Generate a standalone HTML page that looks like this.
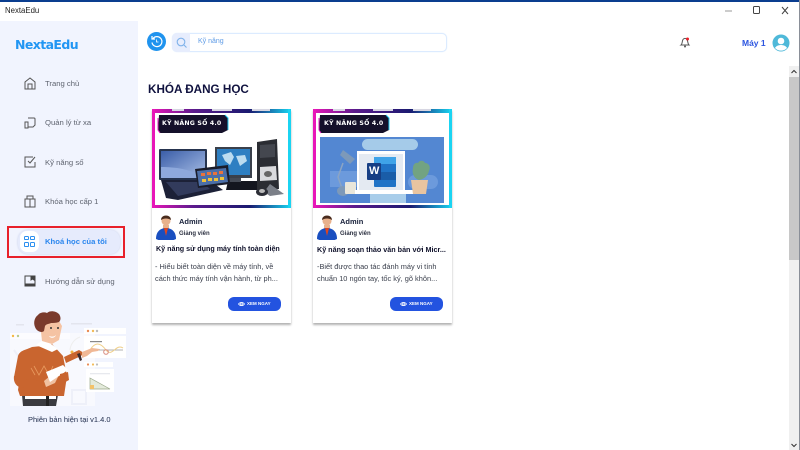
<!DOCTYPE html>
<html><head><meta charset="utf-8">
<style>
*{box-sizing:border-box;margin:0;padding:0}
html,body{width:800px;height:450px;overflow:hidden;background:#fff;font-family:"Liberation Sans","DejaVu Sans",sans-serif}
.a{position:absolute}
.t{position:absolute;white-space:nowrap}
.nav{font-size:7.700px;color:#5f6470;font-family:"Liberation Sans",sans-serif}
.card{position:absolute;top:109px;width:139px;height:214px;background:#fff;box-shadow:0 2px 2px rgba(0,0,0,.3)}
.btn{position:absolute;left:76px;top:188px;width:53px;height:14px;border-radius:6px;background:#2353e0;color:#fff;font-size:4.5px;font-weight:bold;line-height:14px;padding-left:19px}
.btn svg{position:absolute;left:10px;top:4px}
</style></head><body>
<div class="a" style="left:0;top:0;width:800px;height:2px;background:#0a3d8f"></div>
<div class="t" style="left:5px;top:6px;font-size:7.800px;color:#222">NextaEdu</div>
<svg class="a" style="left:725px;top:3px" width="75" height="16" fill="none" stroke="#555"><path d="M0 8h7" stroke="#999"/><rect x="28.500" y="3.500" width="6" height="7" rx="1" stroke="#444"/><path d="M57 4l6 7M63 4l-6 7" stroke="#444"/></svg>

<!-- sidebar -->
<div class="a" style="left:0;top:21px;width:138px;height:429px;background:#f1f4fe"></div>
<div class="t" style="left:15px;top:37px;font-size:12.500px;font-weight:bold;color:#2196f3;font-family:'DejaVu Sans',sans-serif;letter-spacing:-.6px">NextaEdu</div>

<svg class="a" style="left:22px;top:75px" width="16" height="16" fill="none" stroke="#555" stroke-width="1"><path d="M3 14V7l5-4 5 4v7zM6 14V9h4v5"/></svg>
<div class="t nav" style="left:45px;top:79px">Trang chủ</div>
<svg class="a" style="left:22px;top:114px" width="16" height="16" fill="none" stroke="#555"><path d="M6 4h6a1 1 0 0 1 1 1v6l-2 2H6M3 8h3v6H3z"/></svg>
<div class="t nav" style="left:45px;top:118px">Quản lý từ xa</div>
<svg class="a" style="left:22px;top:154px" width="16" height="16" fill="none" stroke="#555"><path d="M13 8v5H3V3h8M6 7l2 2 5-6"/></svg>
<div class="t nav" style="left:45px;top:158px">Kỹ năng số</div>
<svg class="a" style="left:22px;top:193px" width="16" height="16" fill="none" stroke="#555"><path d="M3 6h10v8H3zM8 6v8M5 6V3h6v3"/></svg>
<div class="t nav" style="left:45px;top:197px">Khóa học cấp 1</div>

<div class="a" style="left:7px;top:226px;width:118px;height:32px;border:2px solid #e8202a"></div>
<div class="a" style="left:18px;top:230px;width:102px;height:24px;border-radius:10px;background:#e6ebfc;box-shadow:0 0 2px #c5cdea"></div>
<div class="a" style="left:20px;top:231px;width:19px;height:21px;border-radius:7px;background:#fff"></div>
<svg class="a" style="left:23px;top:235px" width="13" height="13" fill="none" stroke="#2b8ff0"><rect x="1.500" y="1.500" width="4" height="3" rx=".8"/><rect x="7.500" y="1.500" width="4" height="3" rx=".8"/><rect x="1.500" y="7.500" width="4" height="4" rx=".8"/><rect x="7.500" y="7.500" width="4" height="4" rx=".8"/></svg>
<div class="t nav" style="left:45px;top:237px;color:#2a86ee;font-weight:bold">Khoá học của tôi</div>

<svg class="a" style="left:22px;top:273px" width="16" height="16" fill="none" stroke="#444"><path d="M3 3h10v10H3z"/><path d="M3 11h10v2H3z" fill="#444"/><path d="M9 3v4l1.500-1L12 7V3" fill="#444"/></svg>
<div class="t nav" style="left:45px;top:277px">Hướng dẫn sử dụng</div>

<!-- illustration -->
<svg class="a" style="left:0;top:300px" width="138" height="115">
<rect x="10" y="33" width="85" height="73" fill="#f8f9fe"/>
<rect x="10" y="33" width="60" height="6" fill="#fcfcff"/>
<circle cx="13" cy="36" r="1.200" fill="#f5b942"/><circle cx="18" cy="36" r="1.200" fill="#b9c98c"/>
<rect x="16" y="24" width="8" height="1.500" fill="#e3e5ee"/><rect x="71" y="23" width="21" height="1.500" fill="#e3e5ee"/>
<path d="M14 50l15 22M20 90a10 10 0 0 1 20 0M72 90h14v14H72z" stroke="#eef0f9" fill="none" stroke-width="2"/>
<rect x="84" y="28" width="42" height="6" fill="#fff"/>
<rect x="84" y="36" width="42" height="22" fill="#fff"/>
<circle cx="88" cy="31" r="1.200" fill="#e98b54"/><circle cx="93" cy="31" r="1.200" fill="#f2bb5a"/><circle cx="97" cy="31" r="1.200" fill="#bbb"/>
<path d="M89 50h34" stroke="#999" stroke-width=".7"/><path d="M90 50c5-8 10-8 16 0s10-7 17-2" stroke="#f0cf89" fill="none"/>
<circle cx="106" cy="52" r="2.300" fill="none" stroke="#d98b7e"/><rect x="90" y="41" width="12" height="1.200" fill="#888"/>
<circle cx="72" cy="52" r="1.500" fill="#f4b23e"/>
<path d="M70 50a15 15 0 0 1 10-13" stroke="#eee" fill="none"/>
<rect x="84" y="62" width="29" height="5" fill="#fff"/><circle cx="88" cy="64.500" r="1.100" fill="#e98b54"/><circle cx="93" cy="64.500" r="1.100" fill="#f2bb5a"/><circle cx="97" cy="64.500" r="1.100" fill="#bbb"/>
<rect x="86" y="69" width="28" height="23" fill="#fff"/>
<path d="M90 78l20 11H90z" fill="#e3eadb" stroke="#9aa88a" stroke-width=".7"/><rect x="90" y="85" width="4" height="4" fill="#f2c26a"/>
<rect x="90" y="73" width="20" height="1.300" fill="#e7e9ee"/>
<!-- body -->
<path d="M23 106h33l2-11H22z" fill="#3a3b40"/>
<rect x="25" y="93" width="31" height="6" fill="#fff"/>
<rect x="46" y="93" width="3" height="13" fill="#222"/>
<path d="M42 46l10-2 11 12 4 20-3 20H20l-2-6 2-13-6 0 4-21c2-6 8-6 14-9z" fill="#c9652f"/>
<path d="M34 66l5 9 5-9 5 9 4-9M31 68l4 7" stroke="#e89a5f" fill="none" stroke-width=".8"/>
<path d="M36 45l8-6 14 10-6 3z" fill="#fff"/>
<path d="M14 76c-1 8 4 12 10 12h20l2-7-20-2-4-3z" fill="#c9652f"/>
<path d="M44 81l6-5 8 1-3 6-9 4z" fill="#f0c1a1"/>
<path d="M46 72l17-7 5 5-18 12z" fill="#fff"/>
<path d="M60 74l8-2 1 8-9 5z" fill="#c9652f"/>
<path d="M64 57l15-7 5 3-3 3-15 7z" fill="#c9652f"/>
<path d="M82 52l10-4 8 1-2 2-6 1-5 4-5 2z" fill="#f0b896"/>
<path d="M77 54l3 7 2-1-2-7z" fill="#3b2a2c"/>
<!-- head -->
<path d="M40 23l2 18 10 3 7-4 3-14-6-10-15 3z" fill="#f5c3a3"/>
<path d="M35 27c-2-5 0-10 3-12 2-3 7-3 9-2 3-3 9-2 12 1 2 3 2 6 0 8-3 1-6 1-8 1-2 1-5 1-6 3l-1 5c-2 2-7 1-9-4z" fill="#7a3a2c"/>
<path d="M49 36c3 1 5 1 7-1-1 3-5 4-7 1z" fill="#fff"/>
<circle cx="51" cy="28" r="1" fill="#333"/><circle cx="58" cy="28" r="1" fill="#333"/>
</svg>
<div class="t" style="left:28px;top:415px;font-size:7.500px;color:#1d2a4a;font-family:'Liberation Sans',sans-serif">Phiên bản hiện tại v1.4.0</div>

<!-- top bar -->
<div class="a" style="left:147px;top:32px;width:19px;height:19px;border-radius:50%;background:#1f93ee"></div>
<svg class="a" style="left:147px;top:32px" width="19" height="19" fill="none" stroke="#fff" stroke-width="1.200"><path d="M6 6.500a5 5 0 1 1-1 4"/><path d="M5 4v3h3"/><path d="M9.500 7.500v2.500h2" stroke-width=".8"/></svg>
<div class="a" style="left:172px;top:33px;width:275px;height:19px;border:1px solid #dcebff;border-radius:5px;background:#fff;box-shadow:0 0 1px #d5e8ff"></div>
<div class="a" style="left:172px;top:33px;width:18px;height:19px;border-radius:5px 0 0 5px;background:#e7edfd"></div>
<svg class="a" style="left:175px;top:36px" width="13" height="13" fill="none" stroke="#7fb2ea" stroke-width="1.100"><circle cx="6" cy="6" r="3.800"/><path d="M9 9l2.500 2.500"/></svg>
<div class="t" style="left:198px;top:38px;font-size:7px;color:#5f9ce6">Kỹ năng</div>

<svg class="a" style="left:678px;top:35px" width="14" height="14" fill="none" stroke="#555"><path d="M3 10c1.500-1 1-4 2-5.500s3-1.500 4 0 .5 4 2 5.500z"/><circle cx="7" cy="11.500" r="1" fill="#555" stroke="none"/><circle cx="9.500" cy="4" r="1.500" fill="#e8202a" stroke="none"/></svg>
<div class="t" style="left:742px;top:38px;font-size:8.500px;font-weight:bold;color:#2c55e0">Máy 1</div>
<svg class="a" style="left:772px;top:34px" width="18" height="18"><circle cx="9" cy="9" r="8.500" fill="#4fb9d9"/><circle cx="9" cy="7" r="3.300" fill="#fff"/><path d="M3 14c2-4 10-4 12 0-3 3.500-9 3.500-12 0z" fill="#fff"/></svg>

<div class="t" style="left:148px;top:83px;font-size:11.700px;font-weight:bold;color:#10123f">KHÓA ĐANG HỌC</div>

<!-- scrollbar -->
<div class="a" style="left:789px;top:66px;width:10px;height:384px;background:#f0f0f0"></div>
<div class="a" style="left:789px;top:77px;width:10px;height:183px;background:#c8c8c8"></div>
<div class="a" style="left:799px;top:0;width:1px;height:450px;background:#8a8f98"></div>
<svg class="a" style="left:789px;top:66px" width="10" height="384" fill="none" stroke="#333"><path d="M2.500 7L5 4.500 7.500 7M2.500 378L5 380.500 7.500 378"/></svg>

<!-- card 1 -->
<div class="card" style="left:152px">
<svg class="a" style="left:0;top:0" width="139" height="99">
<defs>
<linearGradient id="g" x1="0" x2="1"><stop offset="0" stop-color="#e815b8"/><stop offset=".3" stop-color="#5a1a8c"/><stop offset=".7" stop-color="#1a1a70"/><stop offset="1" stop-color="#18d6f2"/></linearGradient>
<linearGradient id="s" x1="0" y1="0" x2="1" y2="1"><stop offset="0" stop-color="#3b5ea8"/><stop offset="1" stop-color="#a9bfe6"/></linearGradient>
</defs>
<rect width="139" height="99" fill="url(#g)"/>
<rect x="0" y="0" width="3" height="99" fill="#e815b8"/><rect x="136" y="0" width="3" height="99" fill="#1bd4f2"/>
<rect x="3" y="4" width="133" height="92" fill="#fff"/>
<path d="M20 0h12v2H20zM60 0h20v2H60zM100 0h18v2h-18z" fill="#d6d6e2"/>
<path d="M7 6h66l3 3v12l-6 3H8l-2-3z" fill="#14102a"/><path d="M6 9v12l2 3" stroke="#e01cc0" fill="none"/><path d="M73 6l3 3v12" stroke="#20c8ee" fill="none"/>
<!-- laptop -->
<rect x="7" y="40" width="48" height="31" rx="1" fill="#26344f"/><rect x="9" y="42" width="44" height="27" fill="url(#s)"/>
<path d="M9 58c15 0 28 2 44 10v1H9z" fill="#8ea9dc"/>
<path d="M9 71h48l14 10-45 10-12-2z" fill="#1c2137"/><path d="M14 73h36l8 7-32 7z" fill="#323b5c"/>
<!-- keyboard -->
<path d="M76 72h32l2 9H74z" fill="#14161f"/>
<!-- monitor -->
<rect x="63" y="38" width="37" height="31" fill="#3a404b"/><rect x="65" y="40" width="33" height="26" fill="#2e7fc2"/>
<path d="M70 46l9-3 3 5-4 8-5-4zM84 47l9-1 2 6-7 5z" fill="#bcdcf0"/>
<rect x="75" y="69" width="14" height="4" fill="#454a55"/>
<!-- tablet -->
<path d="M43 60l33-4 2 19-32 4z" fill="#1a1d2b"/><path d="M45 62l29-3 2 14-29 4z" fill="#4c6fa8"/>
<path d="M49 64h4v3h-4zM55 63h4v3h-4zM61 63h4v3h-4zM67 62h4v3h-4z" fill="#e8733c"/><path d="M50 70h4v3h-4zM56 69h4v3h-4zM62 69h4v3h-4zM68 68h4v3h-4z" fill="#f0c23a"/>
<!-- tower -->
<path d="M105 33l20-3 2 50-22 2z" fill="#2b2d33"/><path d="M108 36l15-1v13l-15 1z" fill="#44474f"/><path d="M108 58l16-1 1 14-17 1z" fill="#d9dadd"/><ellipse cx="116" cy="65" rx="4" ry="3" fill="#666"/>
<path d="M118 75l14 10-14 2-6-4z" fill="#7b7f88"/><ellipse cx="110" cy="83" rx="6" ry="4" fill="#2c2e36"/><ellipse cx="110" cy="82" rx="3" ry="2" fill="#bbb"/>
</svg>
<div class="t" style="left:10px;top:11px;font-size:6.200px;font-weight:bold;color:#fff;letter-spacing:.2px;font-family:'DejaVu Sans',sans-serif">KỸ NĂNG SỐ 4.0</div>
<svg class="a" style="left:3px;top:105px" width="22" height="26"><circle cx="11" cy="7" r="4.500" fill="#e8b18c"/><path d="M6 6c0-6 10-6 10 0-3-2-7-2-10 0z" fill="#4a2c1e"/><path d="M8 11h6v4H8z" fill="#e8b18c"/><path d="M1 25c0-8 5-11 10-11s10 3 10 11c-6 3-14 3-20 0z" fill="#1a4fc0"/><path d="M9 14h4l-2 8z" fill="#e0451f"/></svg>
<div class="t" style="left:27px;top:108px;font-size:7.500px;font-weight:bold;color:#17203a">Admin</div>
<div class="t" style="left:27px;top:122px;font-size:6px;font-weight:bold;color:#2b3040">Giảng viên</div>
<div class="t" style="left:4px;top:136px;font-size:7.150px;font-weight:bold;color:#10122b">Kỹ năng sử dụng máy tính toàn diện</div>
<div class="t" style="left:3px;top:152px;font-size:7.400px;line-height:11.500px;color:#3a3f4c">- Hiểu biết toàn diện về máy tính, về<br>cách thức máy tính vận hành, từ ph...</div>
<div class="btn"><svg width="7" height="6" fill="none" stroke="#fff" stroke-width=".7"><path d="M.5 3C2 .8 5 .8 6.500 3 5 5.200 2 5.200.5 3z"/><circle cx="3.500" cy="3" r="1"/></svg>XEM NGAY</div>
</div>

<!-- card 2 -->
<div class="card" style="left:313px">
<svg class="a" style="left:0;top:0" width="139" height="99">
<rect width="139" height="99" fill="url(#g)"/>
<rect x="0" y="0" width="3" height="99" fill="#e815b8"/><rect x="136" y="0" width="3" height="99" fill="#1bd4f2"/>
<rect x="3" y="4" width="133" height="92" fill="#fff"/>
<path d="M20 0h12v2H20zM60 0h20v2H60zM100 0h18v2h-18z" fill="#d6d6e2"/>
<rect x="7" y="28" width="124" height="66" fill="#5387d2"/>
<rect x="49" y="30" width="56" height="11" rx="5.500" fill="#a5cbe9"/>
<path d="M17 62h30v16H17z" fill="#6c9adc"/><rect x="95" y="66" width="30" height="14" rx="7" fill="#6c9adc"/>
<rect x="57" y="85" width="36" height="9" fill="#a8cdea"/>
<path d="M30 41l12 9-5 5-10-9z" fill="#7d99b9"/>
<path d="M30 54l-5 14 5 14" stroke="#8ba4c4" stroke-width="1.500" fill="none"/>
<ellipse cx="30" cy="82" rx="6" ry="5" fill="#7d99b9"/>
<rect x="32" y="73" width="11" height="12" rx="1" fill="#e9e6da"/>
<rect x="44" y="42" width="48" height="40" fill="#fff"/><rect x="46" y="45" width="44" height="36" fill="#e4eaf2"/>
<rect x="42" y="81" width="66" height="4" fill="#fff"/>
<rect x="61" y="48" width="22" height="30" rx="1" fill="#2073c6"/><rect x="61" y="48" width="22" height="7" fill="#3fa3e8"/><rect x="61" y="63" width="22" height="8" fill="#1a5da8"/>
<rect x="54" y="54" width="14" height="17" rx="1" fill="#173f85"/>
<path d="M106 71c-6-2-7-8-6-12 0-4 3-6 5-5 1-3 6-3 7 0 4 0 6 4 4 8-1 4-4 8-10 9z" fill="#72a382"/>
<path d="M98 71h17l-2 14h-13z" fill="#e8c4a0"/>
</svg>
<div class="t" style="left:56px;top:56px;font-size:11px;font-weight:bold;color:#fff">W</div>
<svg class="a" style="left:0;top:0" width="90" height="30"><path d="M7 6h66l3 3v12l-6 3H8l-2-3z" fill="#14102a"/><path d="M6 9v12l2 3" stroke="#e01cc0" fill="none"/><path d="M73 6l3 3v12" stroke="#20c8ee" fill="none"/></svg>
<div class="t" style="left:11px;top:11px;font-size:6.200px;font-weight:bold;color:#fff;letter-spacing:.2px;font-family:'DejaVu Sans',sans-serif">KỸ NĂNG SỐ 4.0</div>
<svg class="a" style="left:3px;top:105px" width="22" height="26"><circle cx="11" cy="7" r="4.500" fill="#e8b18c"/><path d="M6 6c0-6 10-6 10 0-3-2-7-2-10 0z" fill="#4a2c1e"/><path d="M8 11h6v4H8z" fill="#e8b18c"/><path d="M1 25c0-8 5-11 10-11s10 3 10 11c-6 3-14 3-20 0z" fill="#1a4fc0"/><path d="M9 14h4l-2 8z" fill="#e0451f"/></svg>
<div class="t" style="left:27px;top:108px;font-size:7.500px;font-weight:bold;color:#17203a">Admin</div>
<div class="t" style="left:27px;top:122px;font-size:6px;font-weight:bold;color:#2b3040">Giảng viên</div>
<div class="t" style="left:4px;top:136px;font-size:7.200px;font-weight:bold;color:#10122b">Kỹ năng soạn thảo văn bản với Micr...</div>
<div class="t" style="left:4px;top:152px;font-size:7.400px;line-height:11.500px;color:#3a3f4c">-Biết được thao tác đánh máy vi tính<br>chuẩn 10 ngón tay, tốc ký, gõ khôn...</div>
<div class="btn" style="left:77px"><svg width="7" height="6" fill="none" stroke="#fff" stroke-width=".7"><path d="M.5 3C2 .8 5 .8 6.500 3 5 5.200 2 5.200.5 3z"/><circle cx="3.500" cy="3" r="1"/></svg>XEM NGAY</div>
</div>
</body></html>
